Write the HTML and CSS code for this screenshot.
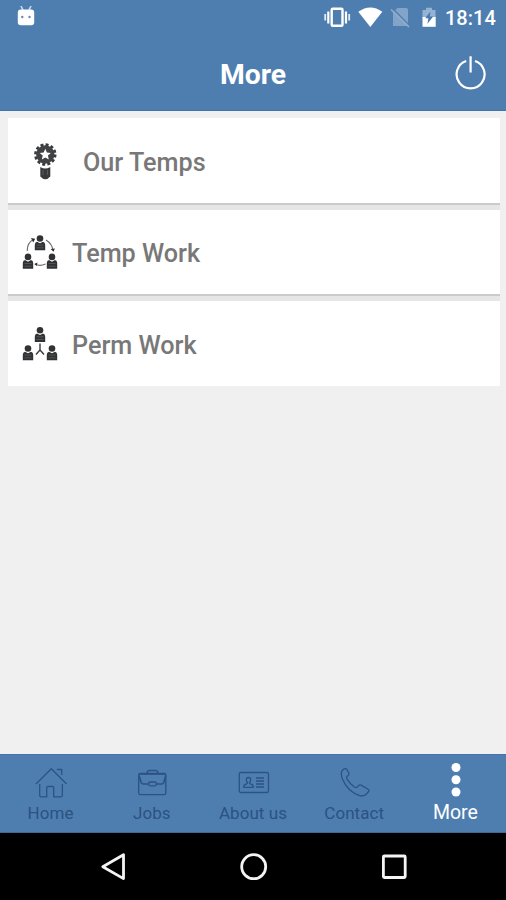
FILE: index.html
```html
<!DOCTYPE html>
<html lang="en">
<head>
<meta charset="utf-8">
<title>More</title>
<link rel="stylesheet" href="styles.css">
</head>
<body>
<svg class="defs" width="0" height="0" aria-hidden="true">
  <defs>
    <g id="person">
      <circle cx="5" cy="3.200" r="3.300"/>
      <path d="M-.2 9.400Q-.2 7 2 6.400L5 8l3-1.600Q10.200 7 10.200 9.400V15H-.2z"/>
      <path d="M1.500 9.800h7M1.500 12.500h7" stroke="#77797b" stroke-width=".5"/>
    </g>
  </defs>
</svg>
<div class="screen">
  <header class="header">
    <div class="status">
      <svg class="robot" width="18" height="20" viewBox="17 6 18 20"><path d="M21 6l2 4M31 6l-2 4" stroke="#c8dcf0" stroke-width="1.600"/><rect x="17.800" y="9.500" width="16.400" height="15.800" rx="3" fill="#fff"/><circle cx="22.300" cy="17" r="1.200" fill="#7189a8"/><circle cx="29.500" cy="17" r="1.200" fill="#7189a8"/></svg>
      <svg width="120" height="24" viewBox="322 5 120 24">
        <rect x="331.700" y="8.700" width="10.800" height="17" rx="1" fill="none" stroke="#fff" stroke-width="2.400"/>
        <path d="M328.300 11.500v12M346 11.500v12" stroke="#fff" stroke-width="2.200"/><path d="M325.200 14v6.500M349.200 14v6.500" stroke="#e3edf6" stroke-width="1.800"/>
        <path d="M358.300 11.800Q370.300 3 382.300 11.800L370.300 27z" fill="#fff"/>
        <path d="M397.500 8H406q2 0 2 2V26H393V12.500z" fill="#83a4c9"/><path d="M392 8L410 26" stroke="#4e7eb0" stroke-width="1.500"/><path d="M391 9.500L409 27" stroke="#91adcc" stroke-width="1.700"/>
        <path d="M422.500 10h3.500V7.800h6V10h3.500v8h-13z" fill="#94b2d2"/><path d="M422.500 17h13.200v9.800h-13.200z" fill="#fff"/><path d="M430.500 11.500L425.200 18.300h3.200l-1 5.500 5.800-7.300h-3.500z" fill="#4778ad"/>
      </svg>
      <span class="time">18:14</span>
    </div>
    <div class="titlebar">
      <h1>More</h1>
      <svg class="power" width="34" height="38" viewBox="454 54 34 38" fill="none" stroke="#fff" stroke-width="2.200"><path d="M466.200 61A14 14 0 1 0 475 61M470.600 56.300V72.500"/></svg>
    </div>
  </header>
  <main class="list">
    <a class="card wide"><svg width="24" height="38" viewBox="33 141 24 38">
      <circle cx="45.300" cy="153.500" r="9.900" fill="none" stroke="#38393b" stroke-width="2.600" stroke-dasharray="3 2.184"/><circle cx="45.300" cy="153.500" r="9.200" fill="#414244"/><path d="M45.300 147.800l1.600 3.700 4 .4-3 2.700.9 4-3.500-2.100-3.500 2.100.9-4-3-2.700 4-.4z" fill="#fff"/><path d="M40.300 166q5 3 10 0v9.500q-5 5.500-10 0z" fill="#38393b"/><path d="M43 169v5M47.500 169v5" stroke="#707173" stroke-width=".6"/></svg><span>Our Temps</span></a>
    <a class="card"><svg width="36" height="38" viewBox="22 233 36 38" fill="#303234">
      <use href="#person" x="35" y="235.300"/><use href="#person" x="23" y="253.700"/><use href="#person" x="47" y="253.700"/>
      <path d="M27.300 251Q27 243 33.300 239.500M46 240Q52 243.500 53 250.500M45.500 264Q40 266.500 35.500 264.300" fill="none" stroke="#6c6e70" stroke-width="1.100"/><path d="M31 238l4.200.8-2 3.800zM50.700 249l4.200-.5-1.400 3.300zM37.500 262.500l-3.300 1.500 2.500 2z"/></svg><span>Temp Work</span></a>
    <a class="card"><svg width="36" height="38" viewBox="22 325 36 38" fill="#303234">
      <use href="#person" x="35" y="327"/><use href="#person" x="23" y="345.300"/><use href="#person" x="47" y="345.300"/><path d="M40 343.500v6.500l-4 4.500M40 350l4 4.500" fill="none" stroke="#38393b" stroke-width="1.400"/></svg><span>Perm Work</span></a>
  </main>
  <nav class="tabs">
    <a class="tab"><svg width="34" height="36" viewBox="34 763 34 36"><path d="M36 784L51.300 768.800 66.600 784M39.700 784v11.200q0 1.600 1.600 1.600h5.400v-9.300q0-1 1-1h5q1 0 1 1v9.300h7q1.700 0 1.700-1.700V784M57 769.500h4.700v5.500"/></svg><span>Home</span></a>
    <a class="tab"><svg width="34" height="36" viewBox="135 763 34 36"><path d="M140.500 773.500h23.800q1.500 0 1.500 1.500v18q0 1.700-1.700 1.700h-23.700q-1.700 0-1.700-1.700v-18q0-1.500 1.800-1.500zM147 773.500q0-3 2.500-3h6q2.500 0 2.500 3"/><path d="M139 775.500l2.200 7q.6 1.500 2.300 1.500h5M156.500 784h5q1.700 0 2.300-1.500l2-7M139 774h26.500" stroke-width="1.700"/><rect x="148.500" y="782" width="8" height="3.800" rx="1.800"/></svg><span>Jobs</span></a>
    <a class="tab"><svg width="34" height="36" viewBox="236 763 34 36"><rect x="239.300" y="772.500" width="29.200" height="20" rx="1.500"/><path d="M243.700 787.300q0-3 3-3.500.8-.2.800-1-1.200-1.300-1.200-3 0-2.300 2.200-2.300t2.200 2.300q0 1.700-1.200 3 0 .8.800 1 3 .5 3 3.500zM256 778h8M256 781h8M256 784h8M256 787h8"/></svg><span>About us</span></a>
    <a class="tab"><svg width="34" height="36" viewBox="337 763 34 36"><path d="M341.700 771.200l2.200-2.200q1.500-1 2.800.3l2 3.200q1 1.800-.5 3l-1.200 1q-1 1 0 2.700 3 5 7.700 8 1.500.8 2.500-.2l1.300-1.400q1.500-1.300 3-.2l6.200 3.600q2 1.300.8 2.700-3.500 5-8.300 4.200-12.700-4.300-18.200-18-1.500-3.700-.3-6.700z"/></svg><span>Contact</span></a>
    <a class="tab active"><svg width="34" height="36" viewBox="438 763 34 36"><circle cx="456" cy="767.500" r="4.500"/><circle cx="456" cy="779.700" r="4.500"/><circle cx="456" cy="792" r="4.500"/></svg><span>More</span></a>
  </nav>
  <div class="system">
    <svg width="30" height="32" viewBox="98 851 30 32"><path d="M102.800 866.700L123.500 854.800V878.600z"/></svg>
    <svg width="30" height="32" viewBox="238 851 30 32"><circle cx="253.700" cy="866.700" r="12"/></svg>
    <svg width="30" height="32" viewBox="378 851 30 32"><rect x="383.400" y="856" width="21.800" height="21.500" rx="1"/></svg>
  </div>
</div>
</body>
</html>
```
FILE: styles.css
```css
* { box-sizing: border-box; }
body { margin: 0; font-family: Roboto, "Liberation Sans", sans-serif; }
svg { display: block; flex: none; }
.defs { position: absolute; }
.screen { width: 506px; height: 900px; display: flex; flex-direction: column; background: #f0f0f0; }
.header { height: 111px; background: #4e7eb0; color: #fff; border-bottom: 1px solid #4174ac; }
.status { height: 37px; display: flex; align-items: center; padding: 0 11px 0 17px; }
.robot { margin: -5px auto 0 0; }
.status svg + svg { margin-top: -3px; }
.time { width: 50px; margin: -2px 0 0 3px; text-align: right; font-size: 20px; font-weight: 500; line-height: 36px; white-space: nowrap; }
.titlebar { height: 73px; display: grid; grid-template-columns: 1fr auto 1fr; align-items: center; }
.titlebar h1 { grid-column: 2; margin: 3px 0 0; font-size: 28.300px; font-weight: 700; line-height: 34px; }
.power { justify-self: end; margin: -2px 18px 0 0; }
.list { flex: 1; display: flex; flex-direction: column; gap: 7px; padding: 7px 6px 0 8px; }
.card { height: 84.500px; display: flex; align-items: center; gap: 14px; padding: 1px 14px 0; background: #fff; color: #787878; font-size: 25.200px; font-weight: 500; box-shadow: 0 2px 0 #cbcbcb, 0 7px 0 #e6e6e6; }
.card:last-child { box-shadow: none; }
.card.wide { gap: 26px; padding-left: 25px; }
.card span { padding-top: 3px; }
.tabs { height: 79px; display: grid; grid-template-columns: repeat(5, 1fr); padding-top: 9px; background: #4e7eb0; box-shadow: inset 0 1px #4174ac, inset 0 -1px #3d6994; }
.tab { display: flex; flex-direction: column; align-items: center; color: #2b5281; font-size: 17px; line-height: 24px; letter-spacing: .05px; white-space: nowrap; }
.tab svg { fill: none; stroke: #2b5384; stroke-width: 1.300; stroke-linejoin: round; }
.tab span { margin-top: 2px; }
.tab.active { color: #fff; font-size: 19.500px; letter-spacing: 0; }
.tab.active svg { fill: #fff; stroke: none; }
.system { height: 67px; display: flex; justify-content: center; gap: 110px; padding-top: 18px; background: #000; }
.system svg { fill: none; stroke: #f4f4f4; stroke-width: 2.800; stroke-linejoin: round; }
```
